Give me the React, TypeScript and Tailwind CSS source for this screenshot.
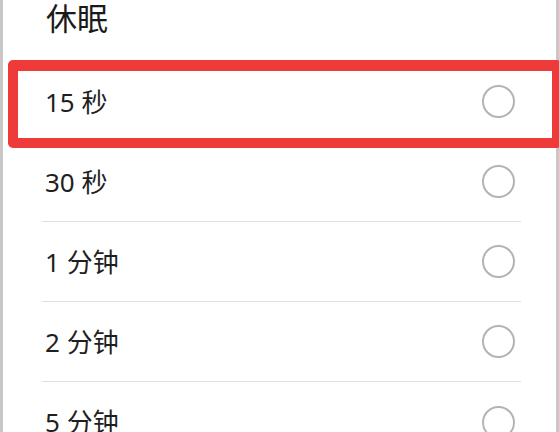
import React from "react";

const items = ["15 秒", "30 秒", "1 分钟", "2 分钟", "5 分钟"];

export default function App() {
  return (
    <div
      className="relative w-[559px] h-[432px] overflow-hidden bg-[#c8c8c8] flex px-[3px]"
      style={{ fontFamily: '"Noto Sans", "Noto Sans CJK SC", sans-serif' }}
    >
      <div className="flex-1 bg-white flex flex-col">
        <div className="shrink-0 h-[62px] pl-[43px] flex items-start">
          <span className="text-[31px] leading-[37px] text-[#1a1a1a]">休眠</span>
        </div>
        {items.map((t, i) => (
          <div key={t} className="shrink-0 ml-[39px] mr-[35px] h-[80px] flex flex-col">
            <div className="flex-1 flex items-center justify-between pl-[3px] pr-[6px]">
              <span className="text-[26px] text-[#1f1f1f] leading-none">{t}</span>
              <span className="w-[33px] h-[33px] rounded-full border-2 border-[#b3b3b3]" />
            </div>
            {i < items.length - 1 && <div className="h-[1px] bg-[#e0e0e0]" />}
          </div>
        ))}
      </div>
      <div className="absolute left-[8px] right-[-3px] top-[60px] h-[88px] border-[10px] border-t-[11px] border-[#ef3a3a] rounded-[5px]" />
    </div>
  );
}
